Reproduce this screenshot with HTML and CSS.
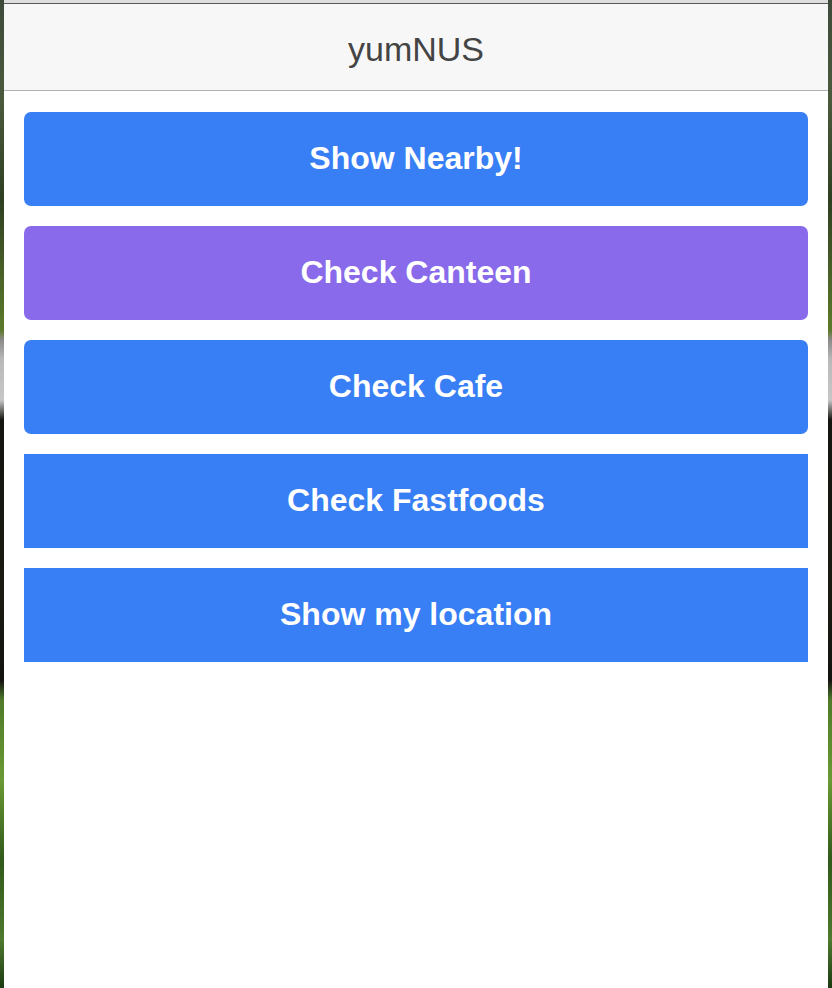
FILE: index.html
```html
<!DOCTYPE html>
<html lang="en">
<head>
<meta charset="utf-8">
<title>yumNUS</title>
<link rel="stylesheet" href="styles.css">
</head>
<body>
<div class="desktop">
  <div class="window">
    <div class="chrome"></div>
    <header class="bar">
      <h1 class="title">yumNUS</h1>
    </header>
    <main class="content">
      <button class="btn btn-blue rounded">Show Nearby!</button>
      <button class="btn btn-purple rounded">Check Canteen</button>
      <button class="btn btn-blue rounded">Check Cafe</button>
      <button class="btn btn-blue">Check Fastfoods</button>
      <button class="btn btn-blue">Show my location</button>
    </main>
  </div>
</div>
</body>
</html>
```

FILE: styles.css
```css
html, body {
  margin: 0;
  padding: 0;
  height: 100%;
}
body {
  font-family: "Liberation Sans", Arial, Helvetica, sans-serif;
  overflow: hidden;
}
.desktop {
  height: 988px;
  display: flex;
  padding: 0 4px;
  background:
    linear-gradient(180deg,
      #3d4a3a 0px, #4b5a3e 100px, #2f3f22 200px, #5c7a2a 330px,
      #8b8b8b 340px, #b9b9b9 360px, #c7c7c7 400px, #141410 420px,
      #1b1a12 600px, #121210 680px, #4f7a2a 700px, #6a9a33 780px,
      #2f5a1a 860px, #4d7a2e 940px, #1d3a12 988px);
}
.window {
  flex: 1;
  display: flex;
  flex-direction: column;
  background: #ffffff;
}
.chrome {
  height: 3px;
  background: #dedede;
  border-bottom: 1px solid #5a5a5a;
}
.bar {
  height: 86px;
  background: #f7f7f7;
  border-bottom: 1px solid #b2b2b2;
  display: flex;
  align-items: center;
  justify-content: center;
}
.title {
  margin: 0;
  font-size: 34px;
  font-weight: normal;
  color: #444444;
  padding-top: 4px;
}
.content {
  display: flex;
  flex-direction: column;
  gap: 20px;
  padding: 21px 20px 0 20px;
}
.btn {
  height: 94px;
  border: none;
  margin: 0;
  padding: 0 0 1px 0;
  font-family: "Liberation Sans", Arial, Helvetica, sans-serif;
  font-size: 32px;
  font-weight: bold;
  color: #ffffff;
  border-radius: 0;
}
.rounded {
  border-radius: 7px;
}
.btn-blue {
  background: #387ef5;
}
.btn-purple {
  background: #886aea;
}
```
